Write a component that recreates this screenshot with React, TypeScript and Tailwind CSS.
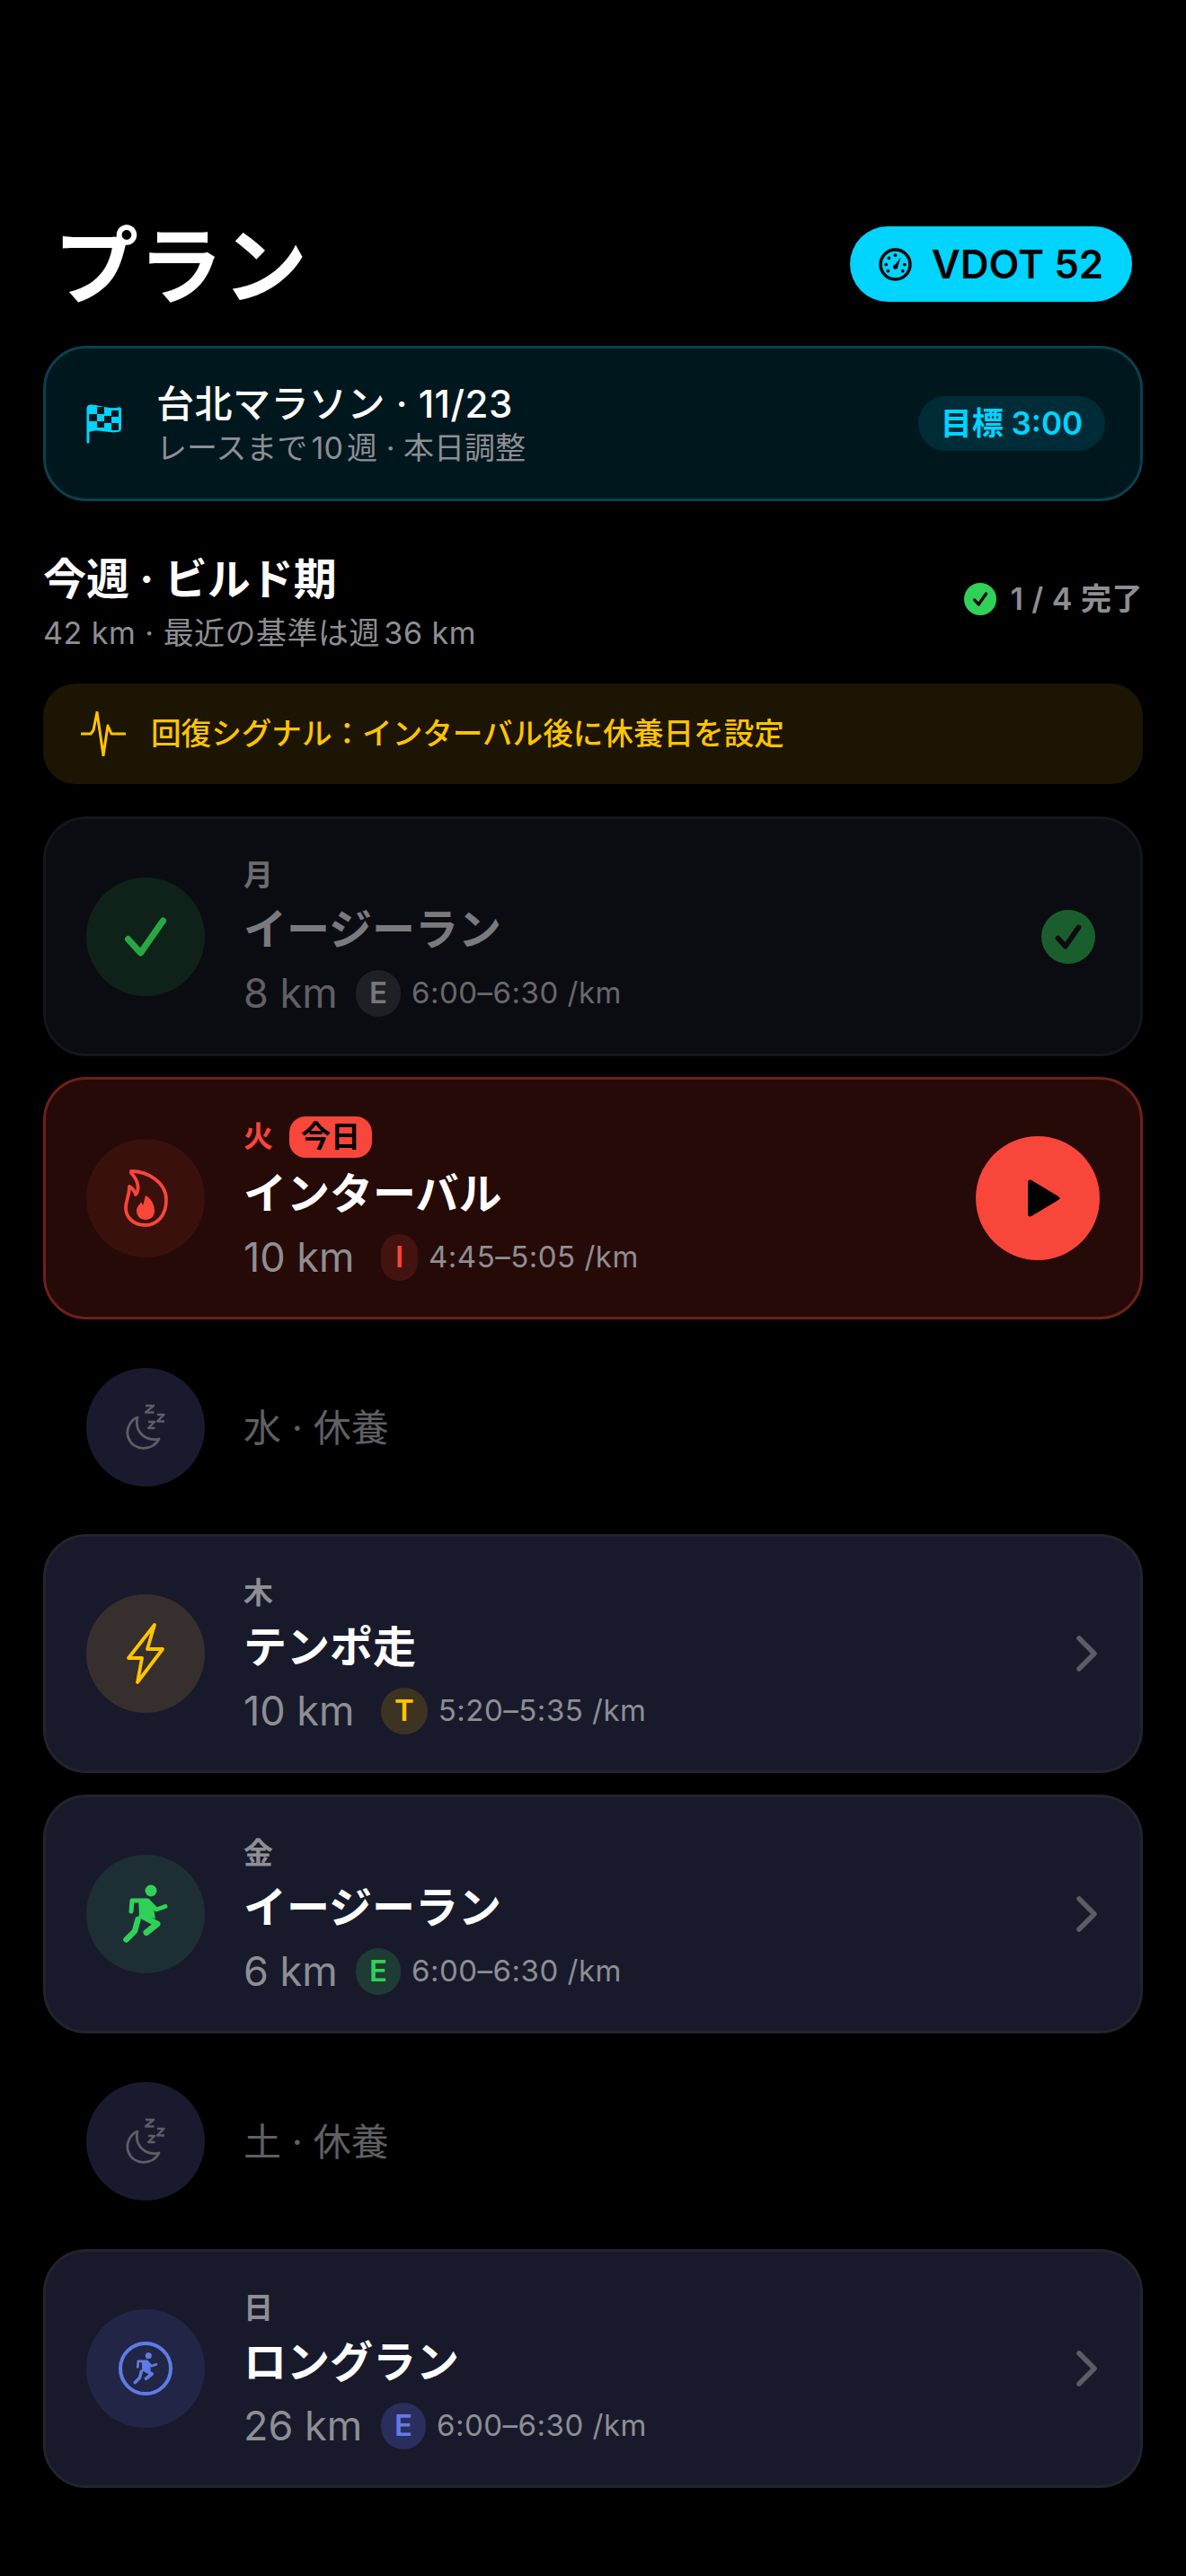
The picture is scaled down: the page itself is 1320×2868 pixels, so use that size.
const F = '"Inter","Noto Sans CJK JP",sans-serif';

function Runner({ color }: { color: string }) {
  return (
    <svg viewBox="0 0 50 66" fill="none" className="w-full h-full">
      <circle cx="31" cy="7" r="6.5" fill={color} />
      <path d="M9 30 L10 18 L27 18 L37 28 L47 24.5" stroke={color} strokeWidth="5" strokeLinecap="round" strokeLinejoin="round" />
      <path d="M17 17 L29 16 L34 27 L36 38 L18 34 Z" fill={color} />
      <path d="M21 35 L38 44 L26 53.5" stroke={color} strokeWidth="7" strokeLinecap="round" strokeLinejoin="round" />
      <path d="M16.5 39 L13 52 L3.5 61.5" stroke={color} strokeWidth="6.5" strokeLinecap="round" strokeLinejoin="round" />
    </svg>
  );
}

function Moon({ color }: { color: string }) {
  return (
    <svg viewBox="0 0 44 52" fill="none" className="w-[44px] h-[52px]">
      <path d="M13 15 C3 19 0 31 3 38 C8 52 29 54 37 39 C24 42 9 33 13 15 Z" stroke={color} strokeWidth="2.8" strokeLinejoin="round" />
      <path d="M22 2 H31 L22 9.5 H31.5" stroke={color} strokeWidth="2.4" strokeLinejoin="round" />
      <path d="M35 12 H42.5 L35 19.5 H43" stroke={color} strokeWidth="2.4" strokeLinejoin="round" />
      <path d="M25 20 H32 L25 27 H32.5" stroke={color} strokeWidth="2.4" strokeLinejoin="round" />
    </svg>
  );
}

function SmallCheck({ size, stroke, color }: { size: number; stroke: number; color: string }) {
  return (
    <svg viewBox="0 0 24 24" width={size} height={size} fill="none">
      <path d="M6 12.8 L10.3 17.5 L18 6.5" stroke={color} strokeWidth={stroke} strokeLinecap="round" strokeLinejoin="round" />
    </svg>
  );
}

function Chevron() {
  return (
    <svg viewBox="0 0 26 40" className="w-[26px] h-[40px] mr-[2px]" fill="none">
      <path d="M4 3 L21 20 L4 37" stroke="#5c5c66" strokeWidth="5.5" strokeLinecap="round" strokeLinejoin="round" />
    </svg>
  );
}

function IconCircle({ bg, children }: { bg: string; children: React.ReactNode }) {
  return (
    <div className={`w-[132px] h-[132px] rounded-full flex items-center justify-center shrink-0 ${bg}`}>{children}</div>
  );
}

function Meta({ km, kmW, letter, pace, chipBg, chipText, kmText, paceText }: { km: string; kmW: string; letter: string; pace: string; chipBg: string; chipText: string; kmText: string; paceText: string }) {
  return (
    <div className="flex items-center h-[52px] mt-[15px]">
      <span className={`text-[45px] leading-[52px] whitespace-nowrap ${kmW} ${kmText}`}>{km}</span>
      <span className={`ml-[25px] h-[52px] min-w-[41px] px-[15px] rounded-full flex items-center justify-center text-[33px] font-semibold ${chipBg} ${chipText}`}>{letter}</span>
      <span className={`ml-[12px] text-[33px] tracking-[0.5px] ${paceText}`}>{pace}</span>
    </div>
  );
}

function RestRow({ label }: { label: string }) {
  return (
    <div className="flex items-center px-[48px] py-[30px]">
      <IconCircle bg="bg-[#191a2e]"><Moon color="#5e5e66" /></IconCircle>
      <span className="ml-[43px] text-[42px] text-[#5f5f64]">{label}</span>
    </div>
  );
}

function Card({ day, title, km, kmW, letter, pace, icon, circle, chipBg, chipText }: { day: string; title: string; km: string; kmW: string; letter: string; pace: string; icon: React.ReactNode; circle: string; chipBg: string; chipText: string }) {
  return (
    <div className="h-[266px] rounded-[48px] bg-[#181a2c] border-[3px] border-[#23232c] pl-[45px] pr-[44px] flex items-center">
      <IconCircle bg={circle}>{icon}</IconCircle>
      <div className="ml-[43px] flex-1">
        <div className="text-[33px] leading-[42px] font-semibold text-[#8e8e93]">{day}</div>
        <div className="mt-[10px] text-[48px] leading-[60px] font-bold text-white">{title}</div>
        <Meta km={km} kmW={kmW} letter={letter} pace={pace} chipBg={chipBg} chipText={chipText} kmText="text-[#8e8e93]" paceText="text-[#8e8e93]" />
      </div>
      <Chevron />
    </div>
  );
}

export default function App() {
  return (
    <div className="w-[1320px] h-[2868px] bg-black text-white overflow-hidden [text-autospace:normal]" style={{ fontFamily: F }}>
      <div className="h-[232px]" />
      <div className="flex items-center justify-between pl-[60px] pr-[60px] h-[124px]">
        <h1 className="mt-[6px] text-[94px] leading-[124px] font-bold">プラン</h1>
        <div className="h-[84px] w-[314px] rounded-full bg-[#00d4ff] text-black flex items-center justify-center gap-[22px]">
          <svg viewBox="0 0 36 36" className="w-[37px] h-[37px]" fill="none">
            <circle cx="18" cy="18" r="16" stroke="black" strokeWidth="3.4" />
            <path d="M16.5 20 L24 10 L20.3 21.5 Z" fill="black" />
            <circle cx="18" cy="20.5" r="2.6" fill="black" />
            <circle cx="18" cy="8" r="1.8" fill="black" />
            <circle cx="11" cy="11" r="1.8" fill="black" />
            <circle cx="8" cy="18" r="1.8" fill="black" />
            <circle cx="10" cy="25" r="1.8" fill="black" />
            <circle cx="28" cy="18" r="1.8" fill="black" />
            <circle cx="26" cy="25" r="1.8" fill="black" />
          </svg>
          <span className="text-[44px] font-semibold">VDOT 52</span>
        </div>
      </div>

      <div className="mt-[29px] mx-[48px] h-[173px] rounded-[48px] bg-[#00171e] border-[3px] border-[#08414e] pl-[45px] pr-[39px] flex items-center">
        <svg viewBox="0 0 40 44" className="w-[40px] h-[44px] shrink-0" fill="none">
          <path d="M0.5 42 C0.5 44 3.5 44 3.5 42 V31 C14 27 25 33 35 31 C38 30.5 39 29 39 27 V6 C39 4 38 3 36 3.5 C25 6 14 0.5 5 0.5 C2 0.5 0.5 2 0.5 5 Z" fill="#00d4ff" />
          <rect x="12" y="3" width="8" height="8" fill="#00171e" />
          <rect x="28" y="7" width="8" height="7" fill="#00171e" />
          <rect x="3" y="11" width="9" height="8" fill="#00171e" />
          <rect x="20" y="13" width="8" height="8" fill="#00171e" />
          <rect x="12" y="19" width="8" height="7" fill="#00171e" />
          <rect x="28" y="21" width="8" height="8" fill="#00171e" />
        </svg>
        <div className="ml-[38px] flex-1">
          <div className="text-[42px] leading-[54px] font-medium text-white tracking-[0.5px]">台北マラソン · 11/23</div>
          <div className="text-[34px] leading-[44px] text-[#8e8e93]">レースまで10週 · 本日調整</div>
        </div>
        <div className="h-[61px] w-[208px] rounded-full bg-[#002c38] text-[#00d4ff] text-[35px] font-semibold flex items-center justify-center">目標 3:00</div>
      </div>

      <div className="mt-[52px] mx-[48px] flex items-center justify-between h-[119px]">
        <div>
          <div className="text-[48px] leading-[64px] font-bold">今週 · ビルド期</div>
          <div className="mt-[6px] text-[34px] leading-[44px] text-[#8e8e93] tracking-[0.5px]">42 km · 最近の基準は週36 km</div>
        </div>
        <div className="flex items-center gap-[15px] mb-[6px]">
          <div className="w-[36px] h-[36px] rounded-full bg-[#30d158] flex items-center justify-center"><SmallCheck size={26} stroke={3} color="#000" /></div>
          <span className="text-[34px] font-semibold text-[#8e8e93] tracking-[0.5px]">1 / 4 完了</span>
        </div>
      </div>

      <div className="mt-[32px] mx-[48px] h-[112px] rounded-[36px] bg-[#1c1503] pl-[42px] flex items-center">
        <svg viewBox="0 0 50 50" className="w-[50px] h-[50px]" fill="none">
          <path d="M1 25 H11 L14 21 L18 1 L25 49 L30 16 L34 25 H49" stroke="#ffc400" strokeWidth="3" strokeLinecap="round" strokeLinejoin="round" />
        </svg>
        <span className="ml-[28px] text-[33.6px] font-medium text-[#ffc400]">回復シグナル：インターバル後に休養日を設定</span>
      </div>

      <div className="mt-[36px] mx-[48px] flex flex-col">
        <div className="h-[267px] rounded-[48px] bg-[#0b0c12] border-[3px] border-[#15161d] pl-[45px] pr-[50px] flex items-center">
          <IconCircle bg="bg-[#0e2219]"><SmallCheck size={78} stroke={2.2} color="#28a745" /></IconCircle>
          <div className="ml-[43px] flex-1">
            <div className="text-[33px] leading-[42px] font-semibold text-[#6c6c70]">月</div>
            <div className="mt-[10px] text-[48px] leading-[60px] font-bold text-[#7a7a7e]">イージーラン</div>
            <Meta km="8 km" kmW="w-[100px]" letter="E" pace="6:00–6:30 /km" chipBg="bg-[#1f2026]" chipText="text-[#77777b]" kmText="text-[#606065]" paceText="text-[#68686c]" />
          </div>
          <div className="w-[60px] h-[60px] rounded-full bg-[#1a5e2d] flex items-center justify-center"><SmallCheck size={46} stroke={3} color="#0b0c12" /></div>
        </div>

        <div className="mt-[23px] h-[270px] rounded-[48px] bg-[#260a08] border-[3px] border-[#6e2018] pl-[45px] pr-[45px] flex items-center">
          <IconCircle bg="bg-[#3a100c]">
            <svg viewBox="0 0 49 64" className="w-[49px] h-[64px]" fill="none">
              <path d="M8 2 C26 2 47 14 47 34 C47 52 36 62 24 62 C10 62 2 53 2 43 C2 34 6 30 6 19 C10 21 12 25 13 28 C17 24 17 13 8 4 Z" stroke="#f9463a" strokeWidth="3.8" strokeLinejoin="round" />
              <path d="M24 29 C30 32 34 39 34 46 C34 52 30 56 24 56 C18 56 14 52 14 46 C14 42 17 40 19 36 L21 40 C22 37 23 33 24 29 Z" fill="#f9463a" />
            </svg>
          </IconCircle>
          <div className="ml-[43px] flex-1">
            <div className="flex items-center h-[46px]">
              <span className="text-[33px] font-semibold text-[#f9463a]">火</span>
              <span className="ml-[18px] w-[92px] h-[46px] rounded-[18px] bg-[#f9463a] text-black text-[33px] font-bold flex items-center justify-center">今日</span>
            </div>
            <div className="mt-[10px] text-[48px] leading-[60px] font-bold text-white">インターバル</div>
            <Meta km="10 km" kmW="w-[128px]" letter="I" pace="4:45–5:05 /km" chipBg="bg-[#44130f]" chipText="text-[#f9463a]" kmText="text-[#8e8e93]" paceText="text-[#8e8e93]" />
          </div>
          <div className="w-[138px] h-[138px] rounded-full bg-[#f9463a] flex items-center justify-center">
            <svg viewBox="0 0 38 42" className="w-[38px] h-[42px] ml-[12px]"><path d="M2 3 C2 1 4 0 6 1 L36 19 C38 20 38 22 36 23 L6 41 C4 42 2 41 2 39 Z" fill="#000" /></svg>
          </div>
        </div>

        <div className="mt-[24px]"><RestRow label="水 · 休養" /></div>

        <div className="mt-[23px]">
          <Card day="木" title="テンポ走" km="10 km" kmW="w-[128px]" letter="T" pace="5:20–5:35 /km" circle="bg-[#372f2d]" chipBg="bg-[#3d3322]" chipText="text-[#ffc400]" icon={
            <svg viewBox="0 0 44 70" className="w-[44px] h-[70px]" fill="none">
              <path d="M32 3 L3 40 H18 L13 67 L41 30 H24 Z" stroke="#ffc400" strokeWidth="3.8" strokeLinejoin="round" />
            </svg>
          } />
        </div>
        <div className="mt-[24px]">
          <Card day="金" title="イージーラン" km="6 km" kmW="w-[100px]" letter="E" pace="6:00–6:30 /km" circle="bg-[#1e2e35]" chipBg="bg-[#1e3b34]" chipText="text-[#30d158]" icon={
            <div className="w-[50px] h-[66px]"><Runner color="#30d158" /></div>
          } />
        </div>
        <div className="mt-[24px]"><RestRow label="土 · 休養" /></div>
        <div className="mt-[24px]">
          <Card day="日" title="ロングラン" km="26 km" kmW="w-[128px]" letter="E" pace="6:00–6:30 /km" circle="bg-[#222546]" chipBg="bg-[#2a2e5c]" chipText="text-[#6579e8]" icon={
            <div className="w-[60px] h-[60px] rounded-full border-[4px] border-[#5e7ce2] flex items-center justify-center">
              <div className="w-[28px] h-[36px]"><Runner color="#5e7ce2" /></div>
            </div>
          } />
        </div>
      </div>
    </div>
  );
}
